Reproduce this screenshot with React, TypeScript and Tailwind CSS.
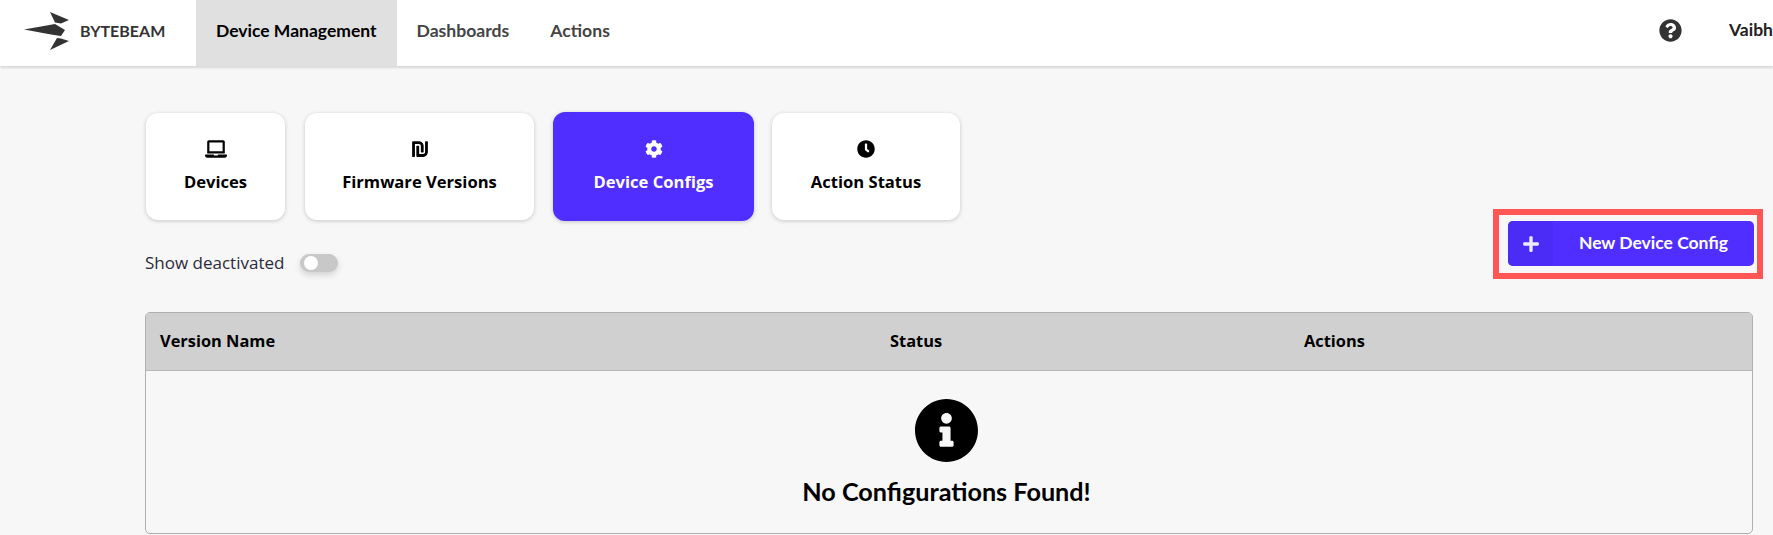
import React from 'react';
import { FaLaptop, FaShekelSign, FaCog, FaClock, FaPlus, FaQuestionCircle, FaInfoCircle } from 'react-icons/fa';

const tabs = [
  { label: 'Devices', icon: <FaLaptop size={22} />, w: 'w-[139px]' },
  { label: 'Firmware Versions', icon: <FaShekelSign size={18} />, w: 'w-[229px]' },
  { label: 'Device Configs', icon: <FaCog size={18} />, w: 'w-[201px] -ml-[1px] -mr-[2px]', active: true },
  { label: 'Action Status', icon: <FaClock size={18} />, w: 'w-[188px]' },
];

const Logo = () => (
  <svg width="46" height="38" viewBox="0 0 46 38" fill="#333">
    <path d="M0 17.5 L31 12 L41 18 L37 24 L27 22.5 Z" />
    <path d="M26 0 L45 8 L37 11.5 L31 10.5 Z" />
    <path d="M26 38 L33 26 L37 26.5 L45 29 Z" />
  </svg>
);

export default function App() {
  return (
    <div className="h-[535px] overflow-hidden bg-[#f7f7f7] font-['Open_Sans',sans-serif]">
      <header className="flex h-[66px] items-stretch bg-white shadow-[0_2px_2px_rgba(0,0,0,0.12)] font-['Lato',sans-serif]">
        <div className="flex w-[196px] items-center gap-[10px] pb-[5px] pl-[24px]">
          <Logo />
          <span className="text-[16px] font-bold text-[#333]">BYTEBEAM</span>
        </div>
        <div className="flex items-center bg-[#e0e0e0] px-5 pb-[4px] text-[17.5px] font-bold text-black">Device Management</div>
        <div className="flex items-center pr-[20px] pl-[20px] pb-[4px] text-[17.6px] font-bold text-[#444]">Dashboards</div>
        <div className="flex items-center px-[21px] pb-[4px] text-[17.6px] font-bold text-[#444]">Actions</div>
        <div className="ml-auto flex items-center gap-[47px] overflow-hidden pb-[5px]">
          <FaQuestionCircle size={23} className="text-[#333]" />
          <span className="w-[44px] overflow-hidden text-[17.5px] font-bold whitespace-nowrap text-[#222]">Vaibhav</span>
        </div>
      </header>

      <main className="pr-[20px] pl-[145px]">
        <div className="flex items-start justify-between">
          <div>
            <div className="ml-[1px] flex items-center gap-5 pt-[46px]">
              {tabs.map((t) => (
                <div
                  key={t.label}
                  className={
                    t.active
                      ? `flex h-[109px] ${t.w} flex-col items-center rounded-[12px] bg-[#4f2eff] pt-[28px] text-white shadow-[0_1px_4px_rgba(0,0,0,0.2)]`
                      : `flex h-[107px] ${t.w} flex-col items-center rounded-[12px] bg-white pt-[27px] text-black shadow-[0_1px_4px_rgba(0,0,0,0.2)]`
                  }
                >
                  <div className="flex h-[18px] items-center">{t.icon}</div>
                  <div className="mt-[12px] text-[16.6px] leading-[24px] font-bold">{t.label}</div>
                </div>
              ))}
            </div>
            <div className="mt-[30px] flex items-center gap-[16px]">
              <span className="text-[17px] leading-[24px] text-[#2a2a3c]">Show deactivated</span>
              <div className="flex h-[18px] w-[38px] items-center rounded-full bg-[#c8c8c8] pl-[4px] shadow-[0_3px_6px_rgba(0,0,0,0.15)]">
                <div className="h-[14px] w-[14px] rounded-full bg-white" />
              </div>
            </div>
          </div>
          <div className="relative mt-[155px] -mr-[1px]">
            <button className="flex h-[45px] w-[246px] items-stretch overflow-hidden rounded-[5px] bg-[#4f2eff] font-['Lato',sans-serif] text-white">
              <span className="flex w-[45px] items-center justify-center bg-[#4b2cf6]">
                <FaPlus size={18} className="opacity-90" />
              </span>
              <span className="flex flex-1 items-center justify-center text-[17.5px] font-bold">New Device Config</span>
            </button>
            <div className="absolute -top-[12px] -right-[9px] -bottom-[13px] -left-[15px] border-[6px] border-[#ff5555]" />
          </div>
        </div>

        <div className="mt-[37px] h-[222px] overflow-hidden rounded-[5px] border border-[#b0b0b0]">
          <div className="grid h-[58px] grid-cols-[730px_414px_1fr] items-center border-b border-[#b8b8b8] bg-[#d0d0d0] pl-[14px] text-[16.4px] font-bold text-black">
            <span>Version Name</span>
            <span>Status</span>
            <span>Actions</span>
          </div>
          <div className="flex flex-col items-center pt-[27px] pr-[5px] font-['Lato',sans-serif]">
            <FaInfoCircle size={65} className="text-black" />
            <div className="mt-[12px] text-[25.2px] leading-[32px] font-bold text-black">No Configurations Found!</div>
          </div>
        </div>
      </main>
    </div>
  );
}
